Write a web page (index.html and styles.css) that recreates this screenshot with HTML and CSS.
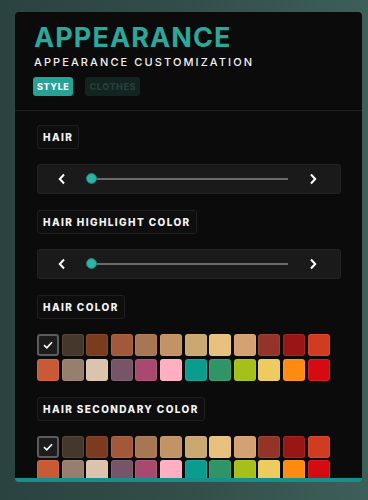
FILE: index.html
```html
<!DOCTYPE html>
<html lang="en">
<head>
    <meta charset="UTF-8">
    <meta name="viewport" content="width=device-width, initial-scale=1.0">
    <title>Appearance</title>
    <link rel="stylesheet" href="styles.css">
</head>
<body>
    <div class="panel">
        <div class="panel-header">
            <h1 class="panel-title">APPEARANCE</h1>
            <p class="panel-subtitle">APPEARANCE CUSTOMIZATION</p>
            <div class="tabs">
                <button class="tab active">STYLE</button>
                <button class="tab">CLOTHES</button>
            </div>
        </div>

        <div class="panel-body">
            <div class="section">
                <span class="section-label">HAIR</span>
                <div class="slider">
                    <svg class="chevron" width="8" height="12" viewBox="0 0 8 12"><path d="M6 1.5 L1.8 6 L6 10.5" fill="none" stroke="#fff" stroke-width="2"/></svg>
                    <div class="track"><span class="thumb"></span></div>
                    <svg class="chevron" width="8" height="12" viewBox="0 0 8 12"><path d="M2 1.5 L6.2 6 L2 10.5" fill="none" stroke="#fff" stroke-width="2"/></svg>
                </div>
            </div>

            <div class="section">
                <span class="section-label">HAIR HIGHLIGHT COLOR</span>
                <div class="slider">
                    <svg class="chevron" width="8" height="12" viewBox="0 0 8 12"><path d="M6 1.5 L1.8 6 L6 10.5" fill="none" stroke="#fff" stroke-width="2"/></svg>
                    <div class="track"><span class="thumb"></span></div>
                    <svg class="chevron" width="8" height="12" viewBox="0 0 8 12"><path d="M2 1.5 L6.2 6 L2 10.5" fill="none" stroke="#fff" stroke-width="2"/></svg>
                </div>
            </div>

            <div class="section">
                <span class="section-label">HAIR COLOR</span>
                <div class="swatches" data-palette></div>
            </div>

            <div class="section">
                <span class="section-label">HAIR SECONDARY COLOR</span>
                <div class="swatches" data-palette></div>
            </div>
        </div>
    </div>

    <script>
        const colors = [
            null, '#46372d', '#7a3b1f', '#a3583a', '#a87653', '#c29365',
            '#cba872', '#e8c17f', '#d3a172', '#943428', '#9a1614', '#d13b20',
            '#c85a36', '#977f6f', '#dcc3ae', '#775467', '#a84a6f', '#feafc2',
            '#0a9c8f', '#2f9466', '#a5c119', '#eecb5f', '#fd8b11', '#d40b11'
        ];

        // Remplir chaque palette
        document.querySelectorAll('[data-palette]').forEach(palette => {
            colors.forEach(color => {
                const swatch = document.createElement('span');
                swatch.className = 'swatch';
                if (color) {
                    swatch.style.backgroundColor = color;
                } else {
                    swatch.classList.add('selected');
                    swatch.innerHTML = '<svg width="10" height="8" viewBox="0 0 10 8"><path d="M1 4.2 L3.8 6.8 L9 1.2" fill="none" stroke="#fff" stroke-width="1.6"/></svg>';
                }
                palette.appendChild(swatch);
            });
        });
    </script>
</body>
</html>
```

FILE: styles.css
```css
* {
    margin: 0;
    padding: 0;
    box-sizing: border-box;
}

body {
    font-family: Inter, "Liberation Sans", sans-serif;
    background: linear-gradient(90deg, #2a4340 0%, #324c48 45%, #3d5f59 100%);
    height: 500px;
    overflow: hidden;
    padding: 12px 6px 0 15px;
}

.panel {
    background-color: #0b0b0b;
    border-radius: 4px;
    height: 470px;
    overflow: hidden;
    border-bottom: 4px solid #14918a;
    display: flex;
    flex-direction: column;
}

.panel-header {
    padding: 12px 19px 14px;
    border-bottom: 1px solid #1e1e1e;
}

.panel-title {
    color: #2aa89b;
    font-size: 27px;
    font-weight: 700;
    letter-spacing: 1.1px;
    line-height: 28px;
}

.panel-subtitle {
    color: #f2f2f2;
    font-size: 11px;
    font-weight: 500;
    letter-spacing: 2.1px;
    line-height: 14px;
    margin-top: 3px;
}

.tabs {
    display: flex;
    gap: 12px;
    margin-top: 8px;
    margin-left: -1px;
}

.tab {
    font-family: Inter, "Liberation Sans", sans-serif;
    font-size: 9px;
    font-weight: 800;
    letter-spacing: 0.6px;
    height: 19px;
    padding: 0 4px;
    border: none;
    border-radius: 3px;
    background-color: #12241f;
    color: #27403b;
}

.tab.active {
    background-color: #26a296;
    color: #fff;
}

.panel-body {
    padding: 14px 21px 0 22px;
    flex: 1;
    overflow: hidden;
}

.section {
    display: flex;
    flex-direction: column;
    align-items: flex-start;
    gap: 15px;
    margin-bottom: 16px;
}

.section-label {
    display: inline-flex;
    align-items: center;
    height: 24px;
    padding: 0 5px;
    background-color: #0e0e0e;
    border: 1px solid #1f1f1f;
    border-radius: 3px;
    color: #f4f4f4;
    font-size: 10px;
    font-weight: 800;
    letter-spacing: 1.4px;
}

.slider {
    width: 100%;
    height: 30px;
    background-color: #1a1a1a;
    border: 1px solid #232323;
    border-radius: 3px;
    display: flex;
    align-items: center;
    padding: 0 23px 0 20px;
}

.track {
    flex: 1;
    height: 2px;
    background-color: #6b6b6b;
    margin: 0 21px 0 25px;
    position: relative;
}

.thumb {
    position: absolute;
    left: -5px;
    top: -5px;
    width: 11px;
    height: 11px;
    border-radius: 50%;
    background-color: #2fb3a6;
    border: 1px solid #1d7d74;
}

.swatches {
    display: grid;
    grid-template-columns: repeat(12, 22px);
    gap: 2.6px;
}

.swatch {
    width: 22px;
    height: 22px;
    border-radius: 3px;
    box-shadow: inset 0 0 0 1px rgba(255, 255, 255, 0.08);
}

.swatch.selected {
    background-color: #1c1c1c;
    border: 2px solid #5c5c5c;
    box-shadow: none;
    display: flex;
    align-items: center;
    justify-content: center;
}
```
